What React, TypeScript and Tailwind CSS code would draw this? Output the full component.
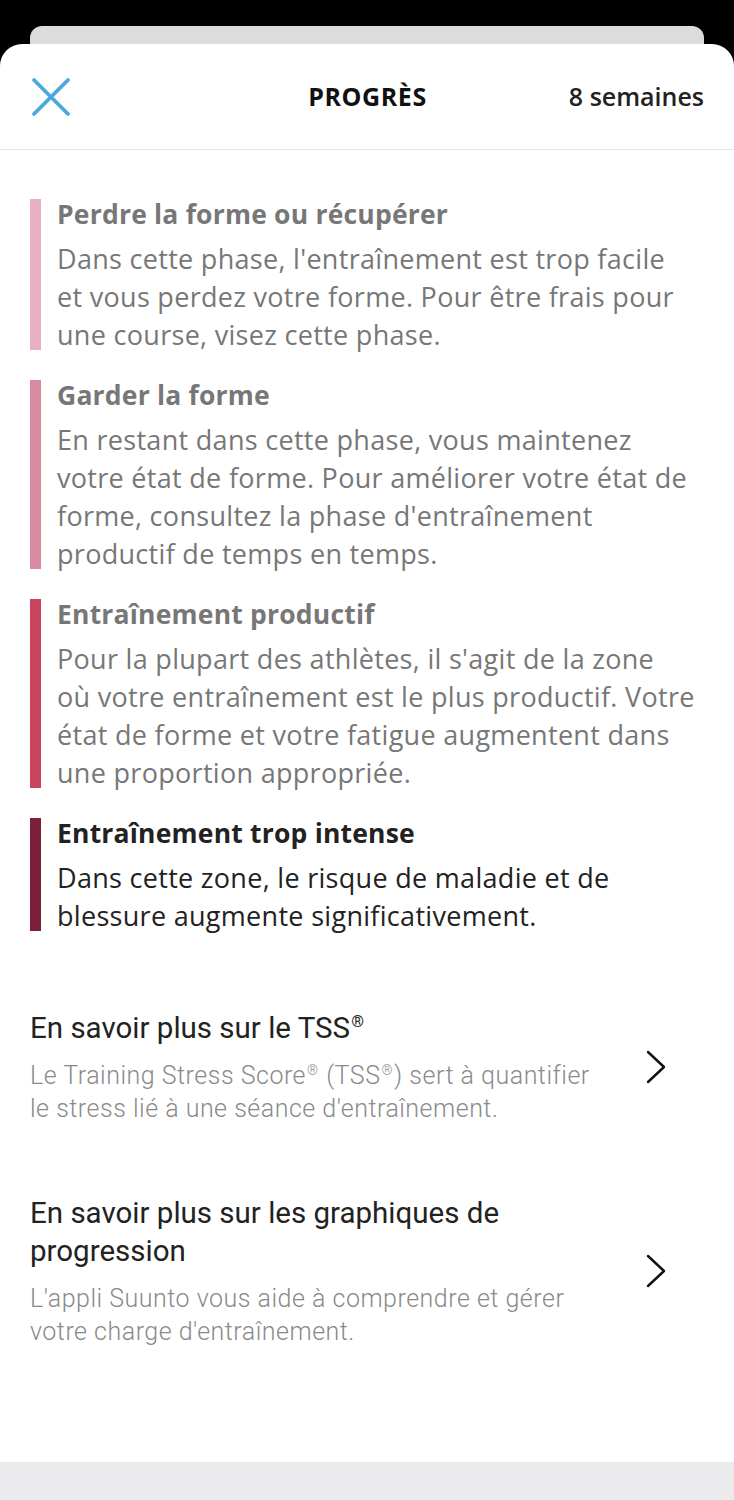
import React from 'react';

type Phase = {
  title: string;
  lines: string[];
  bar: string;
  dark?: boolean;
};

const phases: Phase[] = [
  {
    title: 'Perdre la forme ou récupérer',
    lines: [
      "Dans cette phase, l'entraînement est trop facile",
      'et vous perdez votre forme. Pour être frais pour',
      'une course, visez cette phase.',
    ],
    bar: 'bg-[#e8b0c0]',
  },
  {
    title: 'Garder la forme',
    lines: [
      'En restant dans cette phase, vous maintenez',
      'votre état de forme. Pour améliorer votre état de',
      "forme, consultez la phase d'entraînement",
      'productif de temps en temps.',
    ],
    bar: 'bg-[#d98aa0]',
  },
  {
    title: 'Entraînement productif',
    lines: [
      "Pour la plupart des athlètes, il s'agit de la zone",
      'où votre entraînement est le plus productif. Votre',
      'état de forme et votre fatigue augmentent dans',
      'une proportion appropriée.',
    ],
    bar: 'bg-[#c8445f]',
  },
  {
    title: 'Entraînement trop intense',
    lines: ['Dans cette zone, le risque de maladie et de', 'blessure augmente significativement.'],
    bar: 'bg-[#7b1f3a]',
    dark: true,
  },
];

// small raised ® like the app shows
const Reg = () => <span className="inline-block align-top mx-[1px] text-[0.55em] leading-[1.6em]">®</span>;

const Chevron = () => (
  <svg width="20" height="34" viewBox="0 0 20 34" fill="none">
    <path d="M2 2 L18 17 L2 32" stroke="#111" strokeWidth="2.4" strokeLinecap="round" strokeLinejoin="round" />
  </svg>
);

const LinkRow: React.FC<{ title: React.ReactNode; sub: React.ReactNode }> = ({ title, sub }) => (
  <div className="flex items-center pl-[30px] pr-[68px]">
    <div className="flex-1 pr-[46px]">
      <div className="text-[29.5px] leading-[38px] text-[#222] font-['Roboto',sans-serif]">{title}</div>
      <div className="mt-[12px] text-[25px] leading-[33px] tracking-[0.5px] text-[#8a8a8a] font-['Roboto',sans-serif] font-light">{sub}</div>
    </div>
    <Chevron />
  </div>
);

export default function App() {
  return (
    <div className="w-[734px] h-[1500px] bg-black font-['Open_Sans',sans-serif] overflow-hidden flex flex-col">
      <div className="h-[26px]" />
      <div className="mx-[30px] h-[30px] -mb-[12px] rounded-t-[12px] bg-[#dcdcdc]" />
      <div className="flex-1 bg-white rounded-t-[22px] flex flex-col">
        {/* header */}
        <div className="h-[106px] border-b border-[#e6e6e6] flex items-center px-[30px]">
          <div className="flex-1 pl-[1px]">
            <svg width="40" height="40" viewBox="0 0 40 40">
              <path d="M3 3 L37 37 M37 3 L3 37" stroke="#4aa8dc" strokeWidth="3.8" strokeLinecap="round" />
            </svg>
          </div>
          <div className="text-[25px] font-bold tracking-[0.6px] text-[#111]">PROGRÈS</div>
          <div className="flex-1 text-right text-[25px] font-semibold text-[#222]">8 semaines</div>
        </div>

        {/* phases */}
        <div className="pt-[49px] px-[30px] flex flex-col gap-[30px]">
          {phases.map((p) => (
            <div key={p.title} className="flex gap-[16px]">
              <div className={`w-[11px] shrink-0 ${p.bar}`} />
              <div className="-mb-[4px] min-w-0">
                <div className={`text-[26.5px] leading-[30px] tracking-[0.2px] font-bold ${p.dark ? 'text-[#222]' : 'text-[#777]'}`}>{p.title}</div>
                <div className={`mt-[11px] text-[27px] leading-[38px] tracking-[0.3px] whitespace-nowrap ${p.dark ? 'text-[#222]' : 'text-[#777]'}`}>
                  {p.lines.map((l) => (
                    <div key={l}>{l}</div>
                  ))}
                </div>
              </div>
            </div>
          ))}
        </div>

        <div className="mt-[78px] flex flex-col gap-[69px]">
          <LinkRow
            title={<>En savoir plus sur le TSS<Reg /></>}
            sub={<>Le Training Stress Score<Reg /> (TSS<Reg />) sert à quantifier le stress lié à une séance d'entraînement.</>}
          />
          <LinkRow
            title="En savoir plus sur les graphiques de progression"
            sub="L'appli Suunto vous aide à comprendre et gérer votre charge d'entraînement."
          />
        </div>

        <div className="flex-1" />
        <div className="h-[38px] bg-[#ebebed]" />
      </div>
    </div>
  );
}
